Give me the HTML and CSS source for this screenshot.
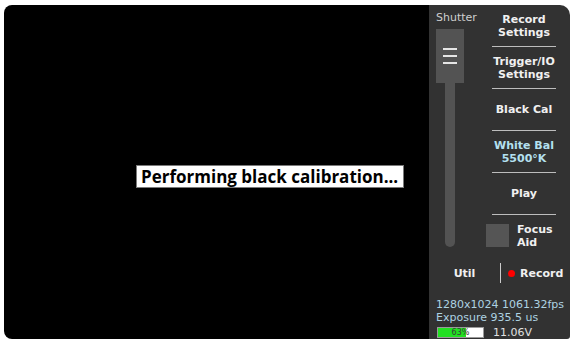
FILE: index.html
```html
<!DOCTYPE html>
<html lang="en">
<head>
  <meta charset="UTF-8" />
  <title>Camera - Main</title>
  <link rel="stylesheet" href="styles.css">
</head>
<body>

  <div class="screen">
    <div class="viewport">
      <div class="message">Performing black calibration...</div>
    </div>

    <div class="panel">
      <div class="controls">
        <div class="shutter-col">
          <span class="label">Shutter</span>
          <div class="slider">
            <div class="handle">
              <span></span><span></span><span></span>
            </div>
            <div class="track"></div>
          </div>
        </div>

        <div class="button-col">
          <div class="btn">Record<br />Settings</div>
          <div class="divider"></div>
          <div class="btn">Trigger/IO<br />Settings</div>
          <div class="divider"></div>
          <div class="btn">Black Cal</div>
          <div class="divider"></div>
          <div class="btn wb">White Bal<br />5500°K</div>
          <div class="divider"></div>
          <div class="btn">Play</div>
          <div class="divider"></div>
          <div class="focus">
            <div class="check"></div>
            <div class="focus-text">Focus<br />Aid</div>
          </div>
        </div>
      </div>

      <div class="actions">
        <div class="util">Util</div>
        <div class="sep"></div>
        <div class="rec"><span class="dot"></span>Record</div>
      </div>

      <div class="info">
        <div>1280x1024 1061.32fps</div>
        <div>Exposure 935.5 us</div>
        <div class="power">
          <div class="battery">
            <div class="fill" style="width: 63%"></div>
            <span class="pct">63%</span>
          </div>
          <span class="volts">11.06V</span>
        </div>
      </div>
    </div>
  </div>

</body>
</html>
```

FILE: styles.css
```css
* { margin: 0; padding: 0; box-sizing: border-box; }
body {
  background-color: #ffffff;
  font-family: "DejaVu Sans", sans-serif;
  font-size: 11px;
  line-height: 13px;
}
.screen {
  display: flex;
  width: 566px;
  height: 334px;
  margin: 5px 0 0 4px;
  border-radius: 8px 10px 3px 8px;
  overflow: hidden;
}
.viewport {
  flex: 1;
  background-color: #000000;
  display: flex;
  align-items: flex-start;
  padding: 160px 0 0 132px;
}
.message {
  background-color: #ffffff;
  border: 1px solid #7a7a7a;
  color: #000000;
  font-family: "Open Sans", sans-serif;
  font-weight: 700;
  font-size: 17px;
  line-height: 21px;
  padding: 0 4px 0 4px;
  width: 268px;
  white-space: nowrap;
}
.panel {
  width: 141px;
  background-color: #323232;
  display: flex;
  flex-direction: column;
}
.controls {
  display: flex;
  height: 251px;
}
.shutter-col {
  width: 28px;
  margin-left: 7px;
  padding-top: 6px;
  display: flex;
  flex-direction: column;
}
.shutter-col .label {
  color: #cfcfcf;
  white-space: nowrap;
}
.slider {
  margin-top: 5px;
  display: flex;
  flex-direction: column;
  align-items: center;
}
.handle {
  width: 28px;
  height: 54px;
  background-color: #535353;
  display: flex;
  flex-direction: column;
  align-items: center;
  justify-content: center;
  gap: 5px;
}
.handle span {
  width: 14px;
  height: 2px;
  background-color: #e6e6e6;
}
.track {
  width: 10px;
  height: 164px;
  background-color: #535353;
  border-radius: 0 0 5px 5px;
}
.button-col {
  width: 64px;
  margin-left: 28px;
  display: flex;
  flex-direction: column;
}
.btn {
  height: 41px;
  display: flex;
  align-items: center;
  justify-content: center;
  text-align: center;
  color: #f0f0f0;
  font-weight: bold;
}
.btn.wb {
  color: #b4e0f0;
}
.divider {
  height: 1px;
  background-color: #bdbdbd;
}
.focus {
  height: 41px;
  margin-left: -6px;
  display: flex;
  align-items: center;
  gap: 8px;
  color: #f0f0f0;
  font-weight: bold;
}
.check {
  width: 23px;
  height: 23px;
  background-color: #555555;
}
.actions {
  margin-top: 7px;
  height: 20px;
  display: flex;
  align-items: center;
  color: #f0f0f0;
  font-weight: bold;
}
.util {
  width: 71px;
  text-align: center;
}
.sep {
  width: 1px;
  height: 20px;
  background-color: #cccccc;
}
.rec {
  display: flex;
  align-items: center;
  gap: 5px;
  padding-left: 7px;
}
.dot {
  width: 7px;
  height: 7px;
  border-radius: 50%;
  background-color: #ff0000;
}
.info {
  margin-top: 15px;
  padding-left: 7px;
  color: #aed2e2;
  white-space: nowrap;
}
.power {
  display: flex;
  align-items: center;
  gap: 9px;
  height: 16px;
}
.battery {
  position: relative;
  width: 47px;
  height: 11px;
  margin-left: 1px;
  background-color: #ffffff;
  border: 1px solid #9a9a9a;
}
.fill {
  height: 100%;
  background-color: #22e022;
}
.pct {
  position: absolute;
  left: 0;
  right: 0;
  top: -1px;
  text-align: center;
  font-size: 8px;
  line-height: 11px;
  color: #3a3a3a;
}
.volts {
  color: #e0e0e0;
}
```
